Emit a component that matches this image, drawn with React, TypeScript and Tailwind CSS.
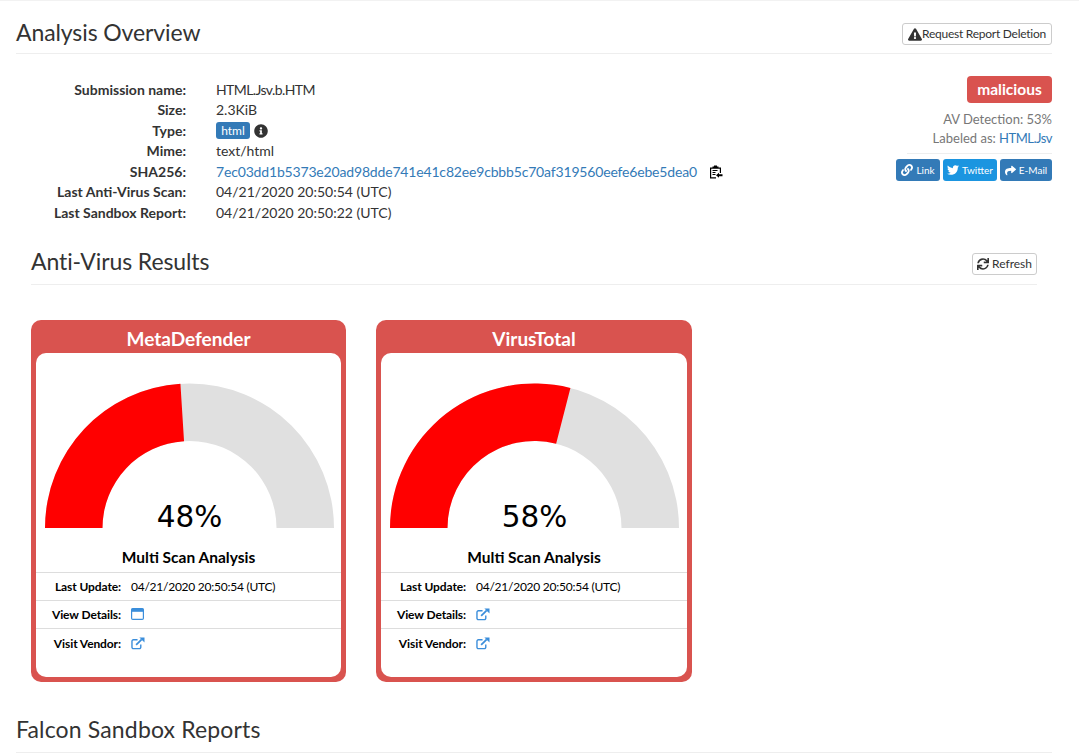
import { FaExclamationTriangle, FaInfoCircle, FaLink, FaTwitter, FaShare, FaSync } from "react-icons/fa";

const font = "[font-family:Lato,'Open_Sans',sans-serif]";

const infoRows = [
  { label: "Submission name:", value: "HTML.Jsv.b.HTM" },
  { label: "Size:", value: "2.3KiB" },
  { label: "Type:", value: "type" },
  { label: "Mime:", value: "text/html" },
  { label: "SHA256:", value: "sha" },
  { label: "Last Anti-Virus Scan:", value: "04/21/2020 20:50:54 (UTC)" },
  { label: "Last Sandbox Report:", value: "04/21/2020 20:50:22 (UTC)" },
];

const ExternalIcon = () => (
  <svg width="14" height="13" viewBox="0 0 15 14" className="text-[#3b8edb]">
    <path d="M10.5 8v3a1.5 1.5 0 0 1-1.5 1.5H2.500A1.500 1.500 0 0 1 1 11V4.500A1.500 1.500 0 0 1 2.500 3H7" fill="none" stroke="currentColor" strokeWidth="1.500" />
    <path d="M5.500 8.500 11.500 2.500" fill="none" stroke="currentColor" strokeWidth="1.900" />
    <path d="M9 .5h5.500V6z" fill="currentColor" />
  </svg>
);

const WindowIcon = () => (
  <svg width="13" height="12" viewBox="0 0 13 12" className="text-[#3b8edb]">
    <rect x=".6" y=".6" width="11.800" height="10.800" rx="1.200" fill="none" stroke="currentColor" strokeWidth="1.200" />
    <rect x=".6" y=".6" width="11.800" height="3.200" fill="currentColor" />
  </svg>
);

const ClipboardIcon = () => (
  <svg width="14" height="14" viewBox="0 0 14 14" className="text-black">
    <path d="M1 2.500h2.500V1.500h1.500V.5h3v1h1.500v1H12V8h-1.200V3.800H2.200v8.500H7v1.200H1z" fill="currentColor" />
    <path d="M3.500 5h5v1h-5zM3.500 7h3v1h-3zM3.500 9h3v1h-3z" fill="currentColor" />
    <path d="M7 10.300 10 7.800v1.500h3.500v2H10v1.500z" fill="currentColor" />
  </svg>
);

function Gauge({ pct }: { pct: number }) {
  const cx = 145.5;
  const cy = 145;
  const R = 144.5;
  const r = 87;
  const a = Math.PI * (1 - pct / 100);
  const ox = cx + R * Math.cos(a);
  const oy = cy - R * Math.sin(a);
  const ix = cx + r * Math.cos(a);
  const iy = cy - r * Math.sin(a);
  return (
    <div className="relative ml-[8px] h-[145px] w-[291px]">
      <svg width="291" height="145" viewBox="0 0 291 145">
        <path d={`M${cx - R} ${cy}A${R} ${R} 0 0 1 ${cx + R} ${cy}L${cx + r} ${cy}A${r} ${r} 0 0 0 ${cx - r} ${cy}Z`} fill="#e0e0e0" />
        <path d={`M${cx - R} ${cy}A${R} ${R} 0 0 1 ${ox} ${oy}L${ix} ${iy}A${r} ${r} 0 0 0 ${cx - r} ${cy}Z`} fill="#ff0000" />
      </svg>
      <div className="absolute bottom-[-9px] left-0 w-full text-center text-[29.5px] leading-[40px] text-black [font-family:'DejaVu_Sans',sans-serif]">
        {pct}%
      </div>
    </div>
  );
}

function VendorCard({ name, pct, details, className }: { name: string; pct: number; details: "window" | "external"; className: string }) {
  return (
    <div className={`rounded-[10px] bg-[#d9534f] px-[5px] pb-[5px] ${className}`}>
      <div className="h-[33px] text-center text-[19px] font-bold leading-[38px] text-white">{name}</div>
      <div className="h-[324px] rounded-[10px] bg-white pt-[30px]">
        <Gauge pct={pct} />
        <div className="h-[45px] border-b border-[#ddd] pt-[18px] text-center text-[15.5px] font-bold leading-[22px] text-black">
          Multi Scan Analysis
        </div>
        <div className="grid grid-cols-[85px_1fr] items-center gap-x-[10px] text-[12px] text-black">
          <div className="flex h-[27px] items-center justify-end pt-[1px] font-bold tracking-[-0.1px]">Last Update:</div>
          <div className="flex h-[27px] items-center pt-[1px] tracking-[-0.25px]">04/21/2020 20:50:54 (UTC)</div>
          <div className="col-span-2 h-px bg-[#ddd]" />
          <div className="flex h-[27px] items-center justify-end pt-[1px] font-bold tracking-[-0.1px]">View Details:</div>
          <div className="flex h-[27px] items-center">{details === "window" ? <WindowIcon /> : <ExternalIcon />}</div>
          <div className="col-span-2 h-px bg-[#ddd]" />
          <div className="flex h-[30px] items-center justify-end font-bold tracking-[-0.1px]">Visit Vendor:</div>
          <div className="flex h-[30px] items-center"><ExternalIcon /></div>
        </div>
      </div>
    </div>
  );
}

export default function App() {
  return (
    <div className={`h-screen overflow-hidden border-t border-[#f2f2f2] bg-white pl-4 pr-[27px] text-[#333] ${font}`}>
      <div className="flex h-[53px] items-start justify-between border-b border-[#eee]">
        <h1 className="mt-[17px] text-[23px] leading-[28px] tracking-[-0.1px] text-[#333]">Analysis Overview</h1>
        <button className="mt-[22px] flex h-[22px] w-[150px] items-center justify-center rounded-[3px] border border-[#ccc] bg-white text-[12px] tracking-[-0.25px] text-[#333]">
          <FaExclamationTriangle className="h-[13px] w-[14px]" />
          Request Report Deletion
        </button>
      </div>

      <div className="flex justify-between pt-[22px]">
        <div className="mt-[3.5px] grid grid-cols-[170px_1fr] gap-x-[30px] text-[14px] leading-[20.5px]">
          {infoRows.map((row) => (
            <div key={row.label} className="contents">
              <div className="text-right font-bold">{row.label}</div>
              <div className="flex items-center">
                {row.value === "type" ? (
                  <>
                    <span className="w-[34px] rounded-[3px] bg-[#337ab7] text-center text-[12px] leading-[17px] text-white">html</span>
                    <FaInfoCircle className="ml-1 h-[14px] w-[14px] text-[#333]" />
                  </>
                ) : row.value === "sha" ? (
                  <>
                    <span className="tracking-[-0.17px] text-[#337ab7]">7ec03dd1b5373e20ad98dde741e41c82ee9cbbb5c70af319560eefe6ebe5dea0</span>
                    <span className="ml-[12px]"><ClipboardIcon /></span>
                  </>
                ) : row.value === "HTML.Jsv.b.HTM" ? (
                  <span className="tracking-[-0.6px]">{row.value}</span>
                ) : (
                  row.value
                )}
              </div>
            </div>
          ))}
        </div>

        <div className="flex w-[156px] flex-col items-end">
          <div className="flex h-[27px] w-[85px] items-center justify-center rounded-[4px] bg-[#d9534f] text-[15.5px] font-bold text-white">malicious</div>
          <div className="mt-[7px] text-[13px] leading-[19px] text-[#777]">AV Detection: 53%</div>
          <div className="text-[13px] leading-[19px] text-[#777]">
            Labeled as: <span className="tracking-[-0.5px] text-[#337ab7]">HTML.Jsv</span>
          </div>
          <div className="mt-[5px] h-px w-[145px] bg-[#eee]" />
          <div className="mt-[5px] flex gap-[3px] text-[10px] text-white">
            <span className="flex h-[22px] w-[44px] items-center justify-center gap-[3px] rounded-[3px] bg-[#337ab7]"><FaLink className="h-[12px] w-[12px]" />Link</span>
            <span className="flex h-[22px] w-[54px] items-center justify-center gap-[3px] rounded-[3px] bg-[#1b95e0]"><FaTwitter className="h-[12px] w-[12px]" />Twitter</span>
            <span className="flex h-[22px] w-[52px] items-center justify-center gap-[3px] rounded-[3px] bg-[#337ab7]"><FaShare className="h-[11px] w-[11px]" />E-Mail</span>
          </div>
        </div>
      </div>

      <div className="mx-[15px] mt-[14.5px] flex h-[47px] items-center justify-between border-b border-[#eee]">
        <h2 className="text-[23px] leading-[28px] tracking-[-0.1px]">Anti-Virus Results</h2>
        <button className="mt-[6px] flex h-[22px] w-[65px] items-center justify-center gap-[3px] rounded-[3px] border border-[#ccc] bg-white pt-[1px] text-[12px]">
          <FaSync className="h-[12px] w-[12px]" />
          Refresh
        </button>
      </div>

      <div className="ml-[15px] mt-[35px] flex gap-[30px]">
        <VendorCard name="MetaDefender" pct={48} details="window" className="w-[315px]" />
        <VendorCard name="VirusTotal" pct={58} details="external" className="w-[316px]" />
      </div>

      <div className="mt-[28px] flex h-[43px] items-center border-b border-[#eee] pb-[4px]">
        <h2 className="text-[23px] leading-[28px] tracking-[0.15px]">Falcon Sandbox Reports</h2>
      </div>
    </div>
  );
}
